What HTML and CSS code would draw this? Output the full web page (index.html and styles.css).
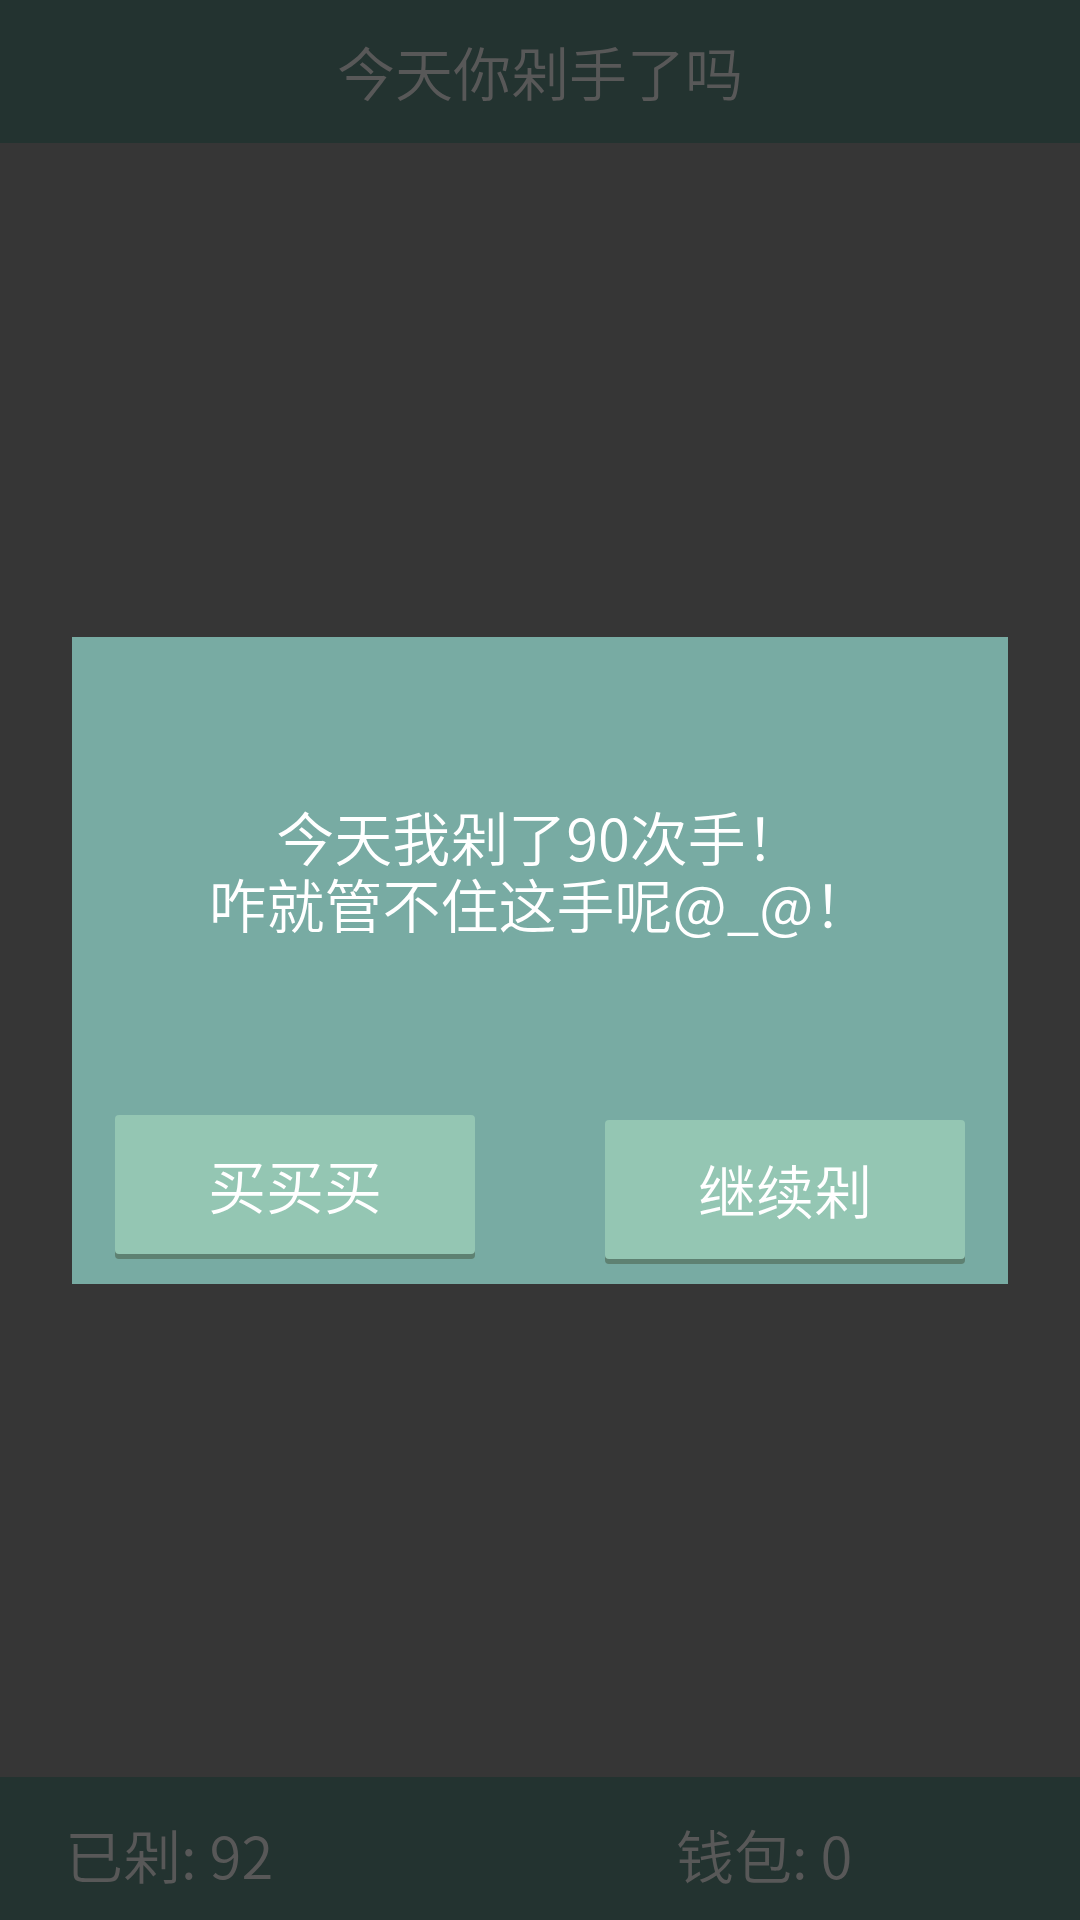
FILE: index.html
```html
<!DOCTYPE html>
<html lang="zh-CN">
<head>
<meta charset="utf-8">
<title>今天你剁手了吗</title>
<link rel="stylesheet" href="styles.css">
</head>
<body>
<div class="app">
  <header class="topbar">今天你剁手了吗</header>
  <main class="stage">
    <section class="dialog">
      <div class="message">
        <div class="line">今天我剁了90次手！</div>
        <div class="line">咋就管不住这手呢@_@！</div>
      </div>
      <div class="actions">
        <button class="btn btn-buy">买买买</button>
        <button class="btn btn-next">继续剁</button>
      </div>
    </section>
  </main>
  <footer class="bottombar">
    <span class="stat">已剁: 92</span>
    <span class="stat">钱包: 0</span>
  </footer>
</div>
</body>
</html>
```
FILE: styles.css
```css
* { box-sizing: border-box; }
html, body {
  margin: 0;
  padding: 0;
  width: 1080px;
  height: 1920px;
  background: #363636;
  font-family: "Noto Sans CJK SC", "Noto Sans", sans-serif;
  font-weight: 350;
}
.app {
  width: 1080px;
  height: 1920px;
  display: flex;
  flex-direction: column;
}
.topbar {
  height: 143px;
  flex: none;
  background: #233330;
  color: #585858;
  font-size: 58px;
  line-height: 143px;
  text-align: center;
}
.stage {
  flex: 1;
  display: flex;
  align-items: center;
  justify-content: center;
  background: #363636;
}
.dialog {
  width: 936px;
  background: #78aba3;
  padding: 166px 43px 25px;
  display: flex;
  flex-direction: column;
}
.message {
  color: #ffffff;
  font-size: 58px;
  line-height: 67px;
  text-align: center;
}
.actions {
  margin-top: 178px;
  display: flex;
  justify-content: space-between;
  align-items: flex-start;
}
.btn {
  width: 360px;
  height: 139px;
  border: none;
  border-radius: 4px;
  background: #94c6b3;
  color: #ffffff;
  font-family: "Noto Sans CJK SC", "Noto Sans", sans-serif;
  font-weight: 350;
  font-size: 58px;
  padding: 0;
  box-shadow: 0 5px 0 #5e8172;
}
.btn-next {
  margin-top: 5px;
}
.bottombar {
  height: 143px;
  flex: none;
  background: #233330;
  color: #585858;
  font-size: 58px;
  display: grid;
  grid-template-columns: 611px 1fr;
  align-items: center;
  padding: 10px 0 0 65px;
}
.stat {
  line-height: 70px;
}
```
